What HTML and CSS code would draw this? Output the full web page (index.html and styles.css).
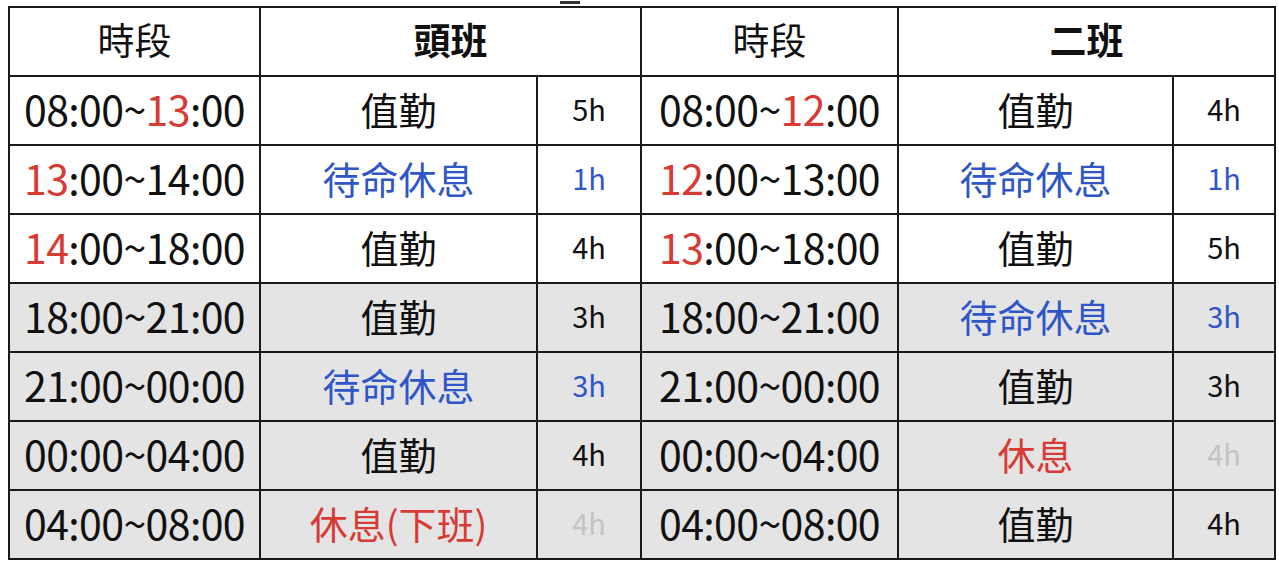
FILE: index.html
```html
<!DOCTYPE html>
<html lang="zh-Hant">
<head>
<meta charset="utf-8">
<link rel="stylesheet" href="styles.css">
</head>
<body>
<div class="page">
  <div class="mark"></div>
  <table class="sched">
    <colgroup>
      <col class="c-time"><col class="c-duty"><col class="c-h">
      <col class="c-time2"><col class="c-duty2"><col class="c-h2">
    </colgroup>
    <tr class="head">
      <th class="thin">時段</th>
      <th colspan="2">頭班</th>
      <th class="thin">時段</th>
      <th colspan="2">二班</th>
    </tr>
    <tr>
      <td class="time">08:00~<span class="red">13</span>:00</td>
      <td class="duty">值勤</td><td class="hr">5h</td>
      <td class="time">08:00~<span class="red">12</span>:00</td>
      <td class="duty">值勤</td><td class="hr">4h</td>
    </tr>
    <tr>
      <td class="time"><span class="red">13</span>:00~14:00</td>
      <td class="duty blue">待命休息</td><td class="hr blue">1h</td>
      <td class="time"><span class="red">12</span>:00~13:00</td>
      <td class="duty blue">待命休息</td><td class="hr blue">1h</td>
    </tr>
    <tr>
      <td class="time"><span class="red">14</span>:00~18:00</td>
      <td class="duty">值勤</td><td class="hr">4h</td>
      <td class="time"><span class="red">13</span>:00~18:00</td>
      <td class="duty">值勤</td><td class="hr">5h</td>
    </tr>
    <tr class="gray">
      <td class="time">18:00~21:00</td>
      <td class="duty">值勤</td><td class="hr">3h</td>
      <td class="time">18:00~21:00</td>
      <td class="duty blue">待命休息</td><td class="hr blue">3h</td>
    </tr>
    <tr class="gray">
      <td class="time">21:00~00:00</td>
      <td class="duty blue">待命休息</td><td class="hr blue">3h</td>
      <td class="time">21:00~00:00</td>
      <td class="duty">值勤</td><td class="hr">3h</td>
    </tr>
    <tr class="gray">
      <td class="time">00:00~04:00</td>
      <td class="duty">值勤</td><td class="hr">4h</td>
      <td class="time">00:00~04:00</td>
      <td class="duty red">休息</td><td class="hr faint">4h</td>
    </tr>
    <tr class="gray">
      <td class="time">04:00~08:00</td>
      <td class="duty red">休息(下班)</td><td class="hr faint">4h</td>
      <td class="time">04:00~08:00</td>
      <td class="duty">值勤</td><td class="hr">4h</td>
    </tr>
  </table>
</div>
</body>
</html>
```

FILE: styles.css
```css
html, body {
  margin: 0;
  padding: 0;
  background: #ffffff;
}
body {
  font-family: "Noto Sans CJK TC", "Noto Sans", "Open Sans", sans-serif;
  color: #111;
}
.page {
  position: relative;
  padding: 6px 0 0 8px;
  width: 1279px;
  height: 565px;
  box-sizing: border-box;
}
.mark {
  position: absolute;
  left: 560px;
  top: 1px;
  width: 20px;
  height: 3px;
  background: #333;
}
.sched {
  border-collapse: collapse;
  table-layout: fixed;
  width: 1266px;
}
.c-time { width: 251px; }
.c-duty { width: 277px; }
.c-h { width: 104px; }
.c-time2 { width: 257px; }
.c-duty2 { width: 275px; }
.c-h2 { width: 102px; }
.sched th, .sched td {
  border: 2px solid #1a1a1a;
  text-align: center;
  padding: 0 0 4px 0;
  height: 63px;
  line-height: 1;
  white-space: nowrap;
  overflow: hidden;
}
.sched th {
  font-size: 37px;
  font-weight: 700;
}
.sched th.thin {
  font-weight: 400;
}
.time {
  font-size: 41px;
  letter-spacing: -0.6px;
}
.duty {
  font-size: 38px;
}
.hr {
  font-size: 29px;
}
.gray td {
  background: #e4e4e4;
}
.red { color: #d83a34; }
.blue { color: #2f56c8; }
.faint { color: #c3c3c3; }
```
